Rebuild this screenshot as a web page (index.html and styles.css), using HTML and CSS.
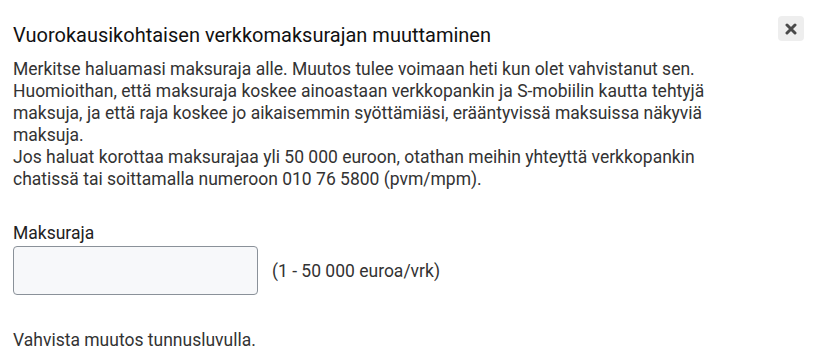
FILE: index.html
```html
<!DOCTYPE html>
<html lang="fi">
<head>
<meta charset="utf-8">
<title>Vuorokausikohtaisen verkkomaksurajan muuttaminen</title>
<link rel="stylesheet" href="styles.css">
</head>
<body>
<div class="dialog">
  <div class="header">
    <h2 class="title">Vuorokausikohtaisen verkkomaksurajan muuttaminen</h2>
    <button class="close" type="button" aria-label="Sulje">
      <svg class="close-icon" viewBox="0 0 12 12" width="12" height="12" aria-hidden="true">
        <path d="M2 2 L10 10 M10 2 L2 10" stroke="#4a4a4a" stroke-width="3" stroke-linecap="round"/>
      </svg>
    </button>
  </div>
  <p class="intro">Merkitse haluamasi maksuraja alle. Muutos tulee voimaan heti kun olet vahvistanut sen.<br>Huomioithan, että maksuraja koskee ainoastaan verkkopankin ja S-mobiilin kautta tehtyjä<br>maksuja, ja että raja koskee jo aikaisemmin syöttämiäsi, erääntyvissä maksuissa näkyviä<br>maksuja.<br>Jos haluat korottaa maksurajaa yli 50 000 euroon, otathan meihin yhteyttä verkkopankin<br>chatissä tai soittamalla numeroon 010 76 5800 (pvm/mpm).</p>
  <label class="label" for="limit">Maksuraja</label>
  <div class="field-row">
    <input class="input" id="limit" type="text">
    <span class="hint">(1 - 50 000 euroa/vrk)</span>
  </div>
  <p class="confirm">Vahvista muutos tunnusluvulla.</p>
</div>
</body>
</html>
```
FILE: styles.css
```css
html, body {
  margin: 0;
  padding: 0;
  background: #ffffff;
}
body {
  font-family: Roboto, "Liberation Sans", sans-serif;
  color: #333333;
}
.dialog {
  padding: 16px 17px 0 13px;
}
.header {
  display: flex;
  justify-content: space-between;
  align-items: flex-start;
}
.title {
  margin: 8px 0 0 0;
  font-size: 20px;
  font-weight: 400;
  line-height: 22px;
  color: #111111;
}
.close {
  width: 26px;
  height: 25px;
  border: none;
  border-radius: 4px;
  background: #eeeeee;
  padding: 0;
  display: flex;
  align-items: center;
  justify-content: center;
}
.close-icon {
  display: block;
}
.intro {
  margin: 12px 0 0 0;
  font-size: 17.5px;
  line-height: 22px;
}
.label {
  display: block;
  margin-top: 33px;
  font-size: 17.5px;
  line-height: 20px;
  color: #222222;
}
.field-row {
  display: flex;
  align-items: center;
  gap: 14px;
  margin-top: 3px;
}
.input {
  width: 245px;
  height: 49px;
  box-sizing: border-box;
  border: 1px solid #8a9199;
  border-radius: 4px;
  background: #f7f8fa;
}
.hint {
  font-size: 17.5px;
  color: #333333;
}
.confirm {
  margin: 34px 0 0 0;
  font-size: 17.5px;
  line-height: 22px;
}
```
